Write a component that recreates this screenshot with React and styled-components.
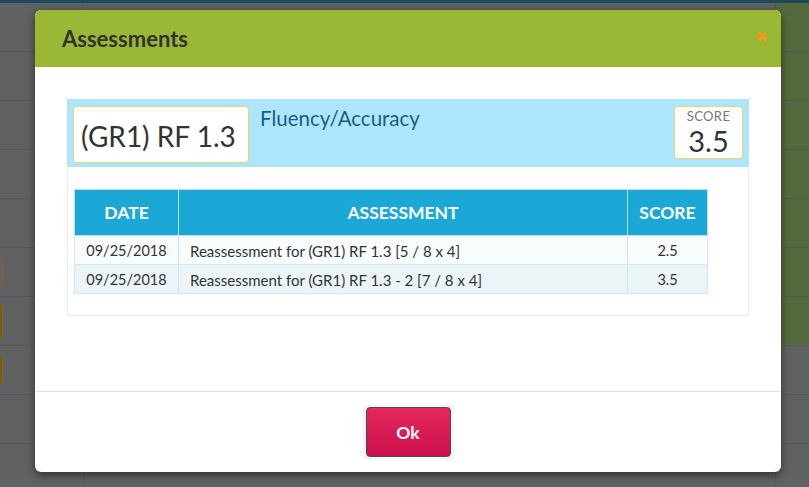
import React from "react";
import styled, { createGlobalStyle } from "styled-components";

const Global = createGlobalStyle`
  html, body { margin: 0; padding: 0; }
  body { width: 809px; height: 487px; overflow: hidden; background: #5f6162; font-family: Lato, "Open Sans", sans-serif; }
  * { box-sizing: border-box; }
`;

const Page = styled.div`
  position: relative;
  width: 809px;
  height: 487px;
  display: flex;
  flex-direction: column;
  background: #5f6162;
`;

const TopStrip = styled.div`
  height: 3px;
  background: #1b4a5c;
  flex: none;
`;

const BgRows = styled.div`
  display: flex;
  flex-direction: column;
`;

const BgRow = styled.div`
  height: 49px;
  flex: none;
  display: grid;
  grid-template-columns: 84px 1fr 33px;
  border-bottom: 1px solid #56595b;
`;

const BgCell = styled.div`
  border-right: 1px solid ${(p) => (p.$line ? "#58595a" : "transparent")};
  background: ${(p) => p.$bg || "transparent"};
  display: flex;
  align-items: center;
`;

const BgTag = styled.div`
  width: 6px;
  height: ${(p) => (p.$tall ? 36 : 30)}px;
  margin-left: -3px;
  border: 1px solid #8a6420;
  border-radius: 3px;
  background: ${(p) => (p.$fill ? "#7a5a1c" : "transparent")};
`;

const Modal = styled.div`
  position: absolute;
  left: 35px;
  top: 10px;
  width: 746px;
  height: 462px;
  background: #fff;
  border-radius: 6px;
  box-shadow: 0 3px 9px rgba(0, 0, 0, 0.5);
  display: flex;
  flex-direction: column;
  overflow: hidden;
`;

const Header = styled.div`
  height: 57px;
  flex: none;
  background: #9bb736;
  display: flex;
  align-items: center;
  justify-content: space-between;
  padding: 0 13px 0 27px;
`;

const Title = styled.h4`
  margin: 0;
  margin-top: -1px;
  font-size: 22px;
  font-weight: 700;
  color: #333;
`;

const Close = styled.span`
  color: #f39a1a;
  font-size: 15px;
  font-weight: 700;
  line-height: 1;
  margin-top: -2px;
  font-family: "DejaVu Sans", sans-serif;
`;

const Body = styled.div`
  flex: 1;
  padding: 32px 32px 0;
`;

const Card = styled.div`
  height: 217px;
  border: 1px solid #ececec;
  border-top: none;
  display: flex;
  flex-direction: column;
`;

const Band = styled.div`
  height: 68px;
  background: #ade6fc;
  display: flex;
  align-items: flex-start;
  padding: 7px 6px 0 6px;
  margin: 0 -1px;
`;

const CodeBox = styled.div`
  width: 176px;
  height: 57px;
  background: #fff;
  border: 1px solid #f4d26a;
  border-radius: 4px;
  display: flex;
  align-items: center;
  padding: 3px 0 0 7px;
  font-size: 28px;
  color: #333;
  flex: none;
`;

const Skill = styled.div`
  flex: 1;
  padding: 0 0 0 11px;
  font-size: 20.5px;
  color: #1b5d87;
`;

const ScoreBox = styled.div`
  width: 69px;
  height: 53px;
  background: #fff;
  border: 1px solid #f4d26a;
  border-radius: 4px;
  display: flex;
  flex-direction: column;
  align-items: center;
  flex: none;
`;

const ScoreLabel = styled.div`
  font-size: 13px;
  letter-spacing: 0.4px;
  color: #777;
  line-height: 16px;
  margin-top: 1px;
`;

const ScoreValue = styled.div`
  font-size: 29px;
  color: #333;
  line-height: 34px;
`;

const TableWrap = styled.div`
  padding: 22px 0 0 6px;
`;

const Table = styled.table`
  width: 634px;
  border-collapse: collapse;
  font-size: 15px;
  color: #333;
`;

const Th = styled.th`
  height: 46px;
  background: #1ca8d6;
  color: #fff;
  font-weight: 700;
  font-size: 17.5px;
  text-transform: uppercase;
  text-align: center;
  border: 1px solid #b9e2f0;
  width: ${(p) => p.$w || "auto"};
`;

const Tr = styled.tr`
  background: ${(p) => (p.$alt ? "#ebf5f8" : "#f9fcfd")};
`;

const Td = styled.td`
  height: 29px;
  border: 1px solid #cfe8f1;
  text-align: ${(p) => p.$align || "left"};
  padding: 0 ${(p) => (p.$align === "center" ? 0 : 11)}px;
  padding-top: 1px;
  font-size: ${(p) => (p.$align === "center" ? 14.5 : 15)}px;
`;

const Footer = styled.div`
  height: 81px;
  flex: none;
  border-top: 1px solid #e0e0e0;
  display: flex;
  justify-content: center;
  padding-top: 12px;
`;

const Halo = styled.div`
  padding: 3px;
  border-radius: 6px;
  background: #f4f4f4;
  height: 56px;
`;

const OkButton = styled.button`
  width: 85px;
  height: 50px;
  border: 1px solid #4a4a4a;
  border-radius: 4px;
  background: linear-gradient(#e5285f, #cb0f4a);
  color: #fff;
  font-family: Lato, sans-serif;
  font-weight: 700;
  font-size: 17.5px;
  cursor: pointer;
`;

const rows = [
  { date: "09/25/2018", name: "Reassessment for (GR1) RF 1.3 [5 / 8 x 4]", score: "2.5" },
  { date: "09/25/2018", name: "Reassessment for (GR1) RF 1.3 - 2 [7 / 8 x 4]", score: "3.5" },
];

const bg = [0, 1, 2, 3, 4, 5, 6, 7, 8, 9];

export default function App() {
  return (
    <>
      <Global />
      <Page>
        <TopStrip />
        <BgRows>
          {bg.map((i) => (
            <BgRow key={i}>
              <BgCell $line>
                {i === 5 && <BgTag />}
                {(i === 6 || i === 7) && <BgTag $fill $tall={i === 6} />}
              </BgCell>
              <BgCell $line />
              <BgCell $bg={i < 7 ? "#536a3e" : "transparent"} />
            </BgRow>
          ))}
        </BgRows>
        <Modal>
          <Header>
            <Title>Assessments</Title>
            <Close>✖</Close>
          </Header>
          <Body>
            <Card>
              <Band>
                <CodeBox>(GR1) RF 1.3</CodeBox>
                <Skill>Fluency/Accuracy</Skill>
                <ScoreBox>
                  <ScoreLabel>SCORE</ScoreLabel>
                  <ScoreValue>3.5</ScoreValue>
                </ScoreBox>
              </Band>
              <TableWrap>
                <Table>
                  <thead>
                    <tr>
                      <Th $w="104px">Date</Th>
                      <Th>Assessment</Th>
                      <Th $w="80px">Score</Th>
                    </tr>
                  </thead>
                  <tbody>
                    {rows.map((r, i) => (
                      <Tr key={i} $alt={i % 2 === 1}>
                        <Td $align="center">{r.date}</Td>
                        <Td>{r.name}</Td>
                        <Td $align="center">{r.score}</Td>
                      </Tr>
                    ))}
                  </tbody>
                </Table>
              </TableWrap>
            </Card>
          </Body>
          <Footer>
            <Halo>
              <OkButton>Ok</OkButton>
            </Halo>
          </Footer>
        </Modal>
      </Page>
    </>
  );
}
